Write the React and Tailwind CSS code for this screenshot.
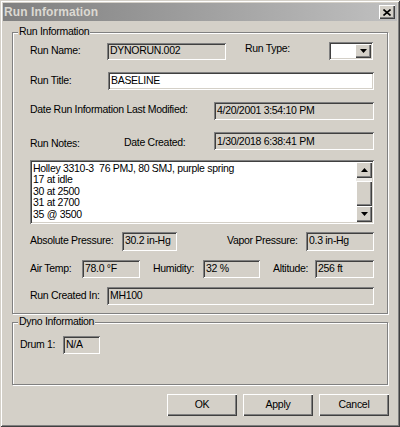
const FONT = { fontFamily: '"Liberation Sans", Arial, sans-serif' }

// Champ en creux (lecture seule, fond gris ou blanc)
function Field({ w, h = 'h-[18px]', white, children }) {
  return (
    <div
      className={`${w} ${h} flex items-center pl-[3px] ${white ? 'bg-white' : 'bg-[#d4d0c8]'} shadow-[inset_1px_1px_0_#808080,inset_-1px_-1px_0_#ffffff,inset_2px_2px_0_#404040,inset_-2px_-2px_0_#d4d0c8] whitespace-nowrap`}
    >
      {children}
    </div>
  )
}

function Label({ w, className = '', children }) {
  return <div className={`${w} shrink-0 whitespace-nowrap ${className}`}>{children}</div>
}

function Arrow({ up }) {
  return (
    <svg width="7" height="4" viewBox="0 0 7 4">
      <polygon points={up ? '3.5,0 7,4 0,4' : '0,0 7,0 3.5,4'} fill="#000" />
    </svg>
  )
}

const RAISED =
  'bg-[#d4d0c8] shadow-[inset_1px_1px_0_#ffffff,inset_-1px_-1px_0_#404040,inset_-2px_-2px_0_#808080]'

function GroupBox({ title, className, children }) {
  return (
    <div className={`relative border border-[#808080] shadow-[inset_1px_1px_0_#ffffff,1px_1px_0_#ffffff] ${className}`}>
      <div className="absolute -top-[8px] left-[5px] bg-[#d4d0c8] px-[1px] leading-[13px]">{title}</div>
      {children}
    </div>
  )
}

function Button({ children }) {
  return (
    <button className={`w-[70px] h-[22px] flex items-center justify-center ${RAISED}`}>{children}</button>
  )
}

export default function App() {
  const notes = ['Holley 3310-3  76 PMJ, 80 SMJ, purple spring', '17 at idle', '30 at 2500', '31 at 2700', '35 @ 3500']
  return (
    <div
      style={FONT}
      className="w-[400px] h-[427px] bg-[#d4d0c8] p-[3px] text-[10.5px] tracking-[-0.3px] text-black shadow-[inset_1px_1px_0_#d4d0c8,inset_-1px_-1px_0_#404040,inset_2px_2px_0_#ffffff,inset_-2px_-2px_0_#808080]"
    >
      {/* barre de titre (fenêtre inactive) */}
      <div className="h-[18px] flex items-center justify-between pl-[1px] pr-[2px] bg-linear-to-r from-[#808080] to-[#c0c0c0]">
        <span className="text-[12px] font-bold tracking-[0.1px] text-[#dcd9d2]">Run Information</span>
        <div className={`w-[16px] h-[14px] flex items-center justify-center ${RAISED}`}>
          <svg width="8" height="7" viewBox="0 0 8 7">
            <path d="M0.5 0.5 L7.5 6.5 M7.5 0.5 L0.5 6.5" stroke="#000" strokeWidth="1.6" />
          </svg>
        </div>
      </div>

      <div className="px-[9px]">
        <GroupBox title="Run Information" className="mt-[11px] h-[282px] pl-[17px] pt-[9px]">
          <div className="flex items-center">
            <Label w="w-[77px]">Run Name:</Label>
            <Field w="w-[119px]" h="h-[17px]">DYNORUN.002</Field>
            <Label w="w-[84px]" className="ml-[19px] -mt-[4px]">Run Type:</Label>
            <div className="w-[44px] h-[18px] flex items-center justify-end bg-white pr-[2px] shadow-[inset_1px_1px_0_#808080,inset_-1px_-1px_0_#ffffff,inset_2px_2px_0_#404040,inset_-2px_-2px_0_#d4d0c8]">
              <div className={`w-[16px] h-[14px] flex items-center justify-center ${RAISED}`}>
                <Arrow />
              </div>
            </div>
          </div>

          <div className="flex items-center mt-[12px]">
            <Label w="w-[78px]">Run Title:</Label>
            <Field w="w-[266px]" white>BASELINE</Field>
          </div>

          <div className="flex items-center mt-[12px]">
            <Label w="w-[184px]" className="-mt-[3px]">Date Run Information Last Modified:</Label>
            <Field w="w-[160px]">4/20/2001 3:54:10 PM</Field>
          </div>

          <div className="flex items-center mt-[11px]">
            <Label w="w-[94px]" className="mt-[5px]">Run Notes:</Label>
            <Label w="w-[90px]" className="mt-[2px]">Date Created:</Label>
            <Field w="w-[160px]">1/30/2018 6:38:41 PM</Field>
          </div>

          <div className="mt-[8px] w-[344px] h-[64px] flex bg-white p-[2px] shadow-[inset_1px_1px_0_#808080,inset_-1px_-1px_0_#ffffff,inset_2px_2px_0_#404040,inset_-2px_-2px_0_#d4d0c8]">
            <div className="flex-1 pl-[1px] pt-[1px] leading-[11.5px] whitespace-pre">
              {notes.map((n) => (
                <div key={n}>{n}</div>
              ))}
            </div>
            <div className="w-[16px] flex flex-col bg-[#ebe9e5]">
              <div className={`h-[16px] flex items-center justify-center ${RAISED}`}>
                <Arrow up />
              </div>
              <div className={`mt-[3px] h-[25px] ${RAISED}`} />
              <div className="flex-1" />
              <div className={`h-[16px] flex items-center justify-center ${RAISED}`}>
                <Arrow />
              </div>
            </div>
          </div>

          <div className="flex items-center mt-[8px]">
            <Label w="w-[92px]">Absolute Pressure:</Label>
            <Field w="w-[55px]" h="h-[19px]">30.2 in-Hg</Field>
            <Label w="w-[79px]" className="ml-[50px]">Vapor Pressure:</Label>
            <Field w="w-[68px]" h="h-[19px]">0.3 in-Hg</Field>
          </div>

          <div className="flex items-center mt-[9px]">
            <Label w="w-[52px]">Air Temp:</Label>
            <Field w="w-[58px]">78.0 °F</Field>
            <Label w="w-[50px]" className="ml-[13px]">Humidity:</Label>
            <Field w="w-[57px]">32 %</Field>
            <Label w="w-[42px]" className="ml-[13px]">Altitude:</Label>
            <Field w="w-[59px]">256 ft</Field>
          </div>

          <div className="flex items-center mt-[9px]">
            <Label w="w-[77px]">Run Created In:</Label>
            <Field w="w-[267px]">MH100</Field>
          </div>
        </GroupBox>

        <GroupBox title="Dyno Information" className="mt-[8px] h-[63px] pl-[7px] pt-[13px]">
          <div className="flex items-center">
            <Label w="w-[43px]">Drum 1:</Label>
            <Field w="w-[37px]">N/A</Field>
          </div>
        </GroupBox>

        <div className="mt-[9px] -mr-[1px] flex justify-end gap-[6px]">
          <Button>OK</Button>
          <Button>Apply</Button>
          <Button>Cancel</Button>
        </div>
      </div>
    </div>
  )
}
